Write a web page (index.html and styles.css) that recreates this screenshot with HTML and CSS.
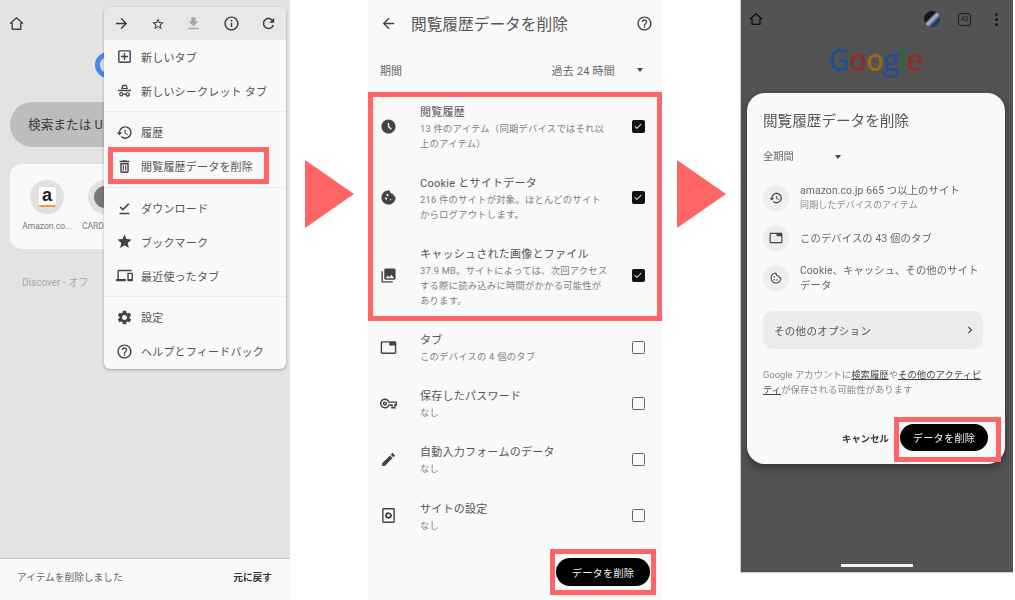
FILE: index.html
```html
<!DOCTYPE html>
<html lang="ja">

<head>
    <meta charset="UTF-8">
    <title>閲覧履歴データを削除</title>
    <link rel="stylesheet" href="styles.css">
</head>

<body>
    <svg class="icon-defs" aria-hidden="true">
        <symbol id="i-home" viewBox="0 0 24 24"><path d="M12 4 3.5 11.7H6V20h12v-8.3h2.5z" fill="none" stroke="currentColor" stroke-width="2" stroke-linejoin="round"/></symbol>
        <symbol id="i-forward" viewBox="0 0 24 24"><path d="M12 4l-1.41 1.41L16.17 11H4v2h12.17l-5.58 5.59L12 20l8-8z"/></symbol>
        <symbol id="i-back" viewBox="0 0 24 24"><path d="M20 11H7.83l5.59-5.59L12 4l-8 8 8 8 1.41-1.41L7.83 13H20v-2z"/></symbol>
        <symbol id="i-star-o" viewBox="0 0 24 24"><path d="M22 9.24l-7.19-.62L12 2 9.19 8.63 2 9.24l5.46 4.73L5.82 21 12 17.27 18.18 21l-1.63-7.03L22 9.24zM12 15.4l-3.76 2.27 1-4.28-3.32-2.88 4.38-.38L12 6.1l1.71 4.04 4.38.38-3.32 2.88 1 4.28L12 15.4z"/></symbol>
        <symbol id="i-star" viewBox="0 0 24 24"><path d="M12 17.27L18.18 21l-1.64-7.03L22 9.24l-7.19-.61L12 2 9.19 8.63 2 9.24l5.46 4.73L5.82 21z"/></symbol>
        <symbol id="i-download" viewBox="0 0 24 24"><path d="M19 9h-4V3H9v6H5l7 7 7-7zM5 18v2h14v-2H5z"/></symbol>
        <symbol id="i-info" viewBox="0 0 24 24"><path d="M11 7h2v2h-2zm0 4h2v6h-2zm1-9C6.48 2 2 6.48 2 12s4.48 10 10 10 10-4.48 10-10S17.52 2 12 2zm0 18c-4.41 0-8-3.59-8-8s3.59-8 8-8 8 3.59 8 8-3.59 8-8 8z"/></symbol>
        <symbol id="i-refresh" viewBox="0 0 24 24"><path d="M17.65 6.35C16.2 4.9 14.21 4 12 4c-4.42 0-7.99 3.58-7.99 8s3.57 8 7.99 8c3.73 0 6.84-2.55 7.73-6h-2.08c-.82 2.33-3.04 4-5.65 4-3.31 0-6-2.69-6-6s2.69-6 6-6c1.66 0 3.14.69 4.22 1.78L13 11h7V4l-2.35 2.35z"/></symbol>
        <symbol id="i-addbox" viewBox="0 0 24 24"><path d="M5 3h14a2 2 0 0 1 2 2v14a2 2 0 0 1-2 2H5a2 2 0 0 1-2-2V5a2 2 0 0 1 2-2zm0 2v14h14V5zm6 2h2v4h4v2h-4v4h-2v-4H7v-2h4z"/></symbol>
        <symbol id="i-incognito" viewBox="0 0 24 24"><path d="M9 4h6l2 6H7zm1.4 2-.9 2.4h5L14.600 6zM3 11h18v2H3zM7.500 14a3.200 3.200 0 0 1 3 2.300h3a3.200 3.200 0 1 1-.2 1.700h-2.600a3.200 3.200 0 1 1-3.200-4zm0 2a1.300 1.300 0 1 0 0 2.600 1.300 1.300 0 0 0 0-2.600zm9 0a1.300 1.300 0 1 0 0 2.600 1.300 1.300 0 0 0 0-2.600z"/></symbol>
        <symbol id="i-history" viewBox="0 0 24 24"><path d="M13 3c-4.97 0-9 4.03-9 9H1l3.89 3.89.07.14L9 12H6c0-3.87 3.13-7 7-7s7 3.13 7 7-3.13 7-7 7c-1.93 0-3.68-.79-4.94-2.06l-1.42 1.42C8.270 19.990 10.510 21 13 21c4.970 0 9-4.030 9-9s-4.030-9-9-9zm-1 5v5l4.280 2.540.72-1.210-3.500-2.080V8H12z"/></symbol>
        <symbol id="i-trash" viewBox="0 0 24 24"><path d="M6 19c0 1.100.9 2 2 2h8c1.100 0 2-.9 2-2V7H6v12zM8 9h8v10H8V9zm1.500 1.500h1.700v7H9.500zm3.300 0h1.700v7h-1.700zM15.500 4l-1-1h-5l-1 1H5v2h14V4h-3.500z"/></symbol>
        <symbol id="i-done" viewBox="0 0 24 24"><path d="M5 18h14v2H5v-2zm4.600-2.700L5 10.700l1.700-1.600 2.900 2.800L17.300 4.500 19 6.100z"/></symbol>
        <symbol id="i-devices" viewBox="0 0 24 24"><path d="M4 6h18V4H4c-1.100 0-2 .9-2 2v11H0v3h14v-3H4V6zm19 2h-6c-.55 0-1 .45-1 1v10c0 .55.45 1 1 1h6c.55 0 1-.45 1-1V9c0-.55-.45-1-1-1zm-1 9h-4v-7h4v7z"/></symbol>
        <symbol id="i-gear" viewBox="0 0 24 24"><path d="M19.140 12.940c.04-.3.06-.61.06-.94 0-.32-.02-.64-.07-.94l2.030-1.580c.18-.14.23-.41.12-.61l-1.920-3.320c-.12-.22-.37-.29-.59-.22l-2.390.96c-.5-.38-1.030-.7-1.620-.94l-.36-2.540c-.04-.24-.24-.41-.48-.41h-3.840c-.24 0-.43.17-.47.41l-.36 2.540c-.59.24-1.130.57-1.620.94l-2.390-.96c-.22-.08-.47 0-.59.22L2.740 8.870c-.12.21-.08.47.12.61l2.030 1.580c-.05.3-.09.63-.09.94s.02.64.07.94l-2.030 1.580c-.18.14-.23.41-.12.61l1.920 3.320c.12.22.37.29.59.22l2.390-.96c.5.38 1.030.7 1.620.94l.36 2.540c.05.24.24.41.48.41h3.840c.24 0 .44-.17.47-.41l.36-2.540c.59-.24 1.130-.56 1.620-.94l2.390.96c.22.08.47 0 .59-.22l1.920-3.320c.12-.22.07-.47-.12-.61l-2.010-1.580zM12 15.600c-1.980 0-3.600-1.620-3.600-3.600s1.620-3.600 3.600-3.600 3.600 1.620 3.600 3.600-1.620 3.600-3.600 3.600z"/></symbol>
        <symbol id="i-help" viewBox="0 0 24 24"><path d="M11 18h2v-2h-2v2zm1-16C6.480 2 2 6.480 2 12s4.480 10 10 10 10-4.480 10-10S17.520 2 12 2zm0 18c-4.410 0-8-3.590-8-8s3.590-8 8-8 8 3.590 8 8-3.590 8-8 8zm0-14c-2.210 0-4 1.790-4 4h2c0-1.100.9-2 2-2s2 .9 2 2c0 2-3 1.750-3 5h2c0-2.250 3-2.500 3-5 0-2.210-1.790-4-4-4z"/></symbol>
        <symbol id="i-clock" viewBox="0 0 24 24"><path d="M11.990 2C6.470 2 2 6.480 2 12s4.470 10 9.990 10C17.520 22 22 17.520 22 12S17.520 2 11.990 2zm3.300 14.710L11 12.410V7h2v4.590l3.710 3.710-1.420 1.410z"/></symbol>
        <symbol id="i-cookie" viewBox="0 0 24 24"><path d="M21.950 10.990c-1.790-.03-3.700-1.950-2.680-4.220-2.970 1-5.780-1.590-5.190-4.560C7.100.74 2 6.410 2 12c0 5.520 4.480 10 10 10 5.890 0 10.540-5.080 9.950-11.010zM8.500 15c-.83 0-1.500-.67-1.500-1.500S7.670 12 8.500 12s1.500.67 1.500 1.500S9.330 15 8.500 15zm2-5C9.670 10 9 9.330 9 8.500S9.670 7 10.500 7s1.500.67 1.500 1.500-.67 1.500-1.500 1.500zm4.500 6c-.55 0-1-.45-1-1s.45-1 1-1 1 .45 1 1-.45 1-1 1z"/></symbol>
        <symbol id="i-cookie-o" viewBox="0 0 24 24"><path d="M12 3.500a8.500 8.500 0 1 0 8.500 8.500c-2.300 0-3.800-1.300-4-3.300-2.300.1-4.300-1.800-4.500-5.200z" fill="none" stroke="currentColor" stroke-width="1.800" stroke-linejoin="round"/><circle cx="9" cy="10" r="1.300"/><circle cx="8.700" cy="15" r="1.300"/><circle cx="14" cy="15.500" r="1.300"/></symbol>
        <symbol id="i-photos" viewBox="0 0 24 24"><path d="M22 16V4c0-1.100-.9-2-2-2H8c-1.100 0-2 .9-2 2v12c0 1.100.9 2 2 2h12c1.100 0 2-.9 2-2zm-11-4l2.030 2.710L16 11l4 5H8l3-4zM2 6v14c0 1.100.9 2 2 2h14v-2H4V6H2z"/></symbol>
        <symbol id="i-tab" viewBox="0 0 24 24"><path d="M21 3H3c-1.100 0-2 .9-2 2v14c0 1.100.9 2 2 2h18c1.100 0 2-.9 2-2V5c0-1.100-.9-2-2-2zm0 16H3V5h10v4h8v10z"/></symbol>
        <symbol id="i-key" viewBox="0 0 24 24"><path d="M22 19h-6v-4h-2.680c-1.140 2.420-3.600 4-6.320 4-3.860 0-7-3.140-7-7s3.140-7 7-7c2.720 0 5.170 1.580 6.320 4H24v6h-2v4zm-4-2h2v-4h2v-2H11.940l-.23-.67C11.010 8.340 9.110 7 7 7c-2.760 0-5 2.240-5 5s2.240 5 5 5c2.110 0 4.010-1.340 4.710-3.330l.23-.67H18v4zM7 15c-1.650 0-3-1.350-3-3s1.350-3 3-3 3 1.350 3 3-1.350 3-3 3zm0-4c-.55 0-1 .45-1 1s.45 1 1 1 1-.45 1-1-.45-1-1-1z"/></symbol>
        <symbol id="i-edit" viewBox="0 0 24 24"><path d="M3 17.250V21h3.750L17.810 9.940l-3.750-3.750L3 17.250zM20.710 7.040c.39-.39.39-1.020 0-1.410l-2.340-2.340c-.39-.39-1.020-.39-1.410 0l-1.830 1.830 3.750 3.750 1.830-1.830z"/></symbol>
        <symbol id="i-site" viewBox="0 0 24 24"><path d="M5 1.500h14a2 2 0 0 1 2 2v17a2 2 0 0 1-2 2H5a2 2 0 0 1-2-2v-17a2 2 0 0 1 2-2zm0 2v17h14v-17z"/><path d="M12 7l1.200 1.500 1.900-.3.700 1.800 1.700 1.900-1.200 1.500-.3 1.900-1.800.7L12 17l-1.500-1.200-1.900.3-.7-1.800L6.700 12l1.200-1.500.3-1.900 1.800-.7zm0 3a2 2 0 1 0 0 4 2 2 0 0 0 0-4z"/></symbol>
        <symbol id="i-check" viewBox="0 0 24 24"><path d="M9.500 16.200 5.300 12l-1.500 1.500 5.700 5.700L20.700 8 19.200 6.500z"/></symbol>
        <symbol id="i-chevron" viewBox="0 0 24 24"><path d="M10 6 8.600 7.400 13.200 12l-4.600 4.600L10 18l6-6z"/></symbol>
    </svg>

    <div class="page">

        <section class="phone phone-menu">
            <div class="top-bar">
                <svg class="icon icon-home"><use href="#i-home"/></svg>
            </div>
            <div class="google-arc"></div>
            <div class="search-pill">検索または U</div>
            <div class="shortcuts">
                <div class="shortcut">
                    <div class="shortcut-circle"><span class="amazon-logo">a</span></div>
                    <span class="shortcut-label">Amazon.co...</span>
                </div>
                <div class="shortcut">
                    <div class="shortcut-circle"><span class="card-dot"></span></div>
                    <span class="shortcut-label shortcut-label-cut">CARD</span>
                </div>
            </div>
            <p class="discover">Discover - オフ</p>
            <div class="snackbar">
                <span>アイテムを削除しました</span>
                <span class="snackbar-action">元に戻す</span>
            </div>

            <div class="menu">
                <div class="menu-tools">
                    <svg class="tool"><use href="#i-forward"/></svg>
                    <svg class="tool tool-small"><use href="#i-star-o"/></svg>
                    <svg class="tool tool-off"><use href="#i-download"/></svg>
                    <svg class="tool"><use href="#i-info"/></svg>
                    <svg class="tool"><use href="#i-refresh"/></svg>
                </div>
                <div class="menu-group">
                    <div class="menu-item"><svg class="icon"><use href="#i-addbox"/></svg>新しいタブ</div>
                    <div class="menu-item"><svg class="icon"><use href="#i-incognito"/></svg>新しいシークレット タブ</div>
                </div>
                <div class="menu-group">
                    <div class="menu-item"><svg class="icon"><use href="#i-history"/></svg>履歴</div>
                    <div class="menu-item"><svg class="icon"><use href="#i-trash"/></svg>閲覧履歴データを削除</div>
                </div>
                <div class="menu-group">
                    <div class="menu-item"><svg class="icon"><use href="#i-done"/></svg>ダウンロード</div>
                    <div class="menu-item"><svg class="icon"><use href="#i-star"/></svg>ブックマーク</div>
                    <div class="menu-item"><svg class="icon"><use href="#i-devices"/></svg>最近使ったタブ</div>
                </div>
                <div class="menu-group">
                    <div class="menu-item"><svg class="icon"><use href="#i-gear"/></svg>設定</div>
                    <div class="menu-item"><svg class="icon"><use href="#i-help"/></svg>ヘルプとフィードバック</div>
                </div>
            </div>
            <div class="mark mark-menu"></div>
        </section>

        <div class="arrow"></div>

        <section class="phone phone-settings">
            <header class="settings-head">
                <svg class="icon head-back"><use href="#i-back"/></svg>
                <h2>閲覧履歴データを削除</h2>
                <svg class="icon head-help"><use href="#i-help"/></svg>
            </header>
            <div class="period">
                <span>期間</span>
                <span class="period-value">過去 24 時間</span>
                <span class="caret"></span>
            </div>
            <div class="options">
                <div class="option">
                    <svg class="icon"><use href="#i-clock"/></svg>
                    <div class="option-text">
                        <div class="option-title">閲覧履歴</div>
                        <div class="option-desc">13 件のアイテム（同期デバイスではそれ以<br>上のアイテム）</div>
                    </div>
                    <span class="check is-on"><svg><use href="#i-check"/></svg></span>
                </div>
                <div class="option">
                    <svg class="icon"><use href="#i-cookie"/></svg>
                    <div class="option-text">
                        <div class="option-title">Cookie とサイトデータ</div>
                        <div class="option-desc">216 件のサイトが対象。ほとんどのサイト<br>からログアウトします。</div>
                    </div>
                    <span class="check is-on"><svg><use href="#i-check"/></svg></span>
                </div>
                <div class="option">
                    <svg class="icon"><use href="#i-photos"/></svg>
                    <div class="option-text">
                        <div class="option-title">キャッシュされた画像とファイル</div>
                        <div class="option-desc">37.9 MB。サイトによっては、次回アクセス<br>する際に読み込みに時間がかかる可能性が<br>あります。</div>
                    </div>
                    <span class="check is-on"><svg><use href="#i-check"/></svg></span>
                </div>
                <div class="option">
                    <svg class="icon"><use href="#i-tab"/></svg>
                    <div class="option-text">
                        <div class="option-title">タブ</div>
                        <div class="option-desc">このデバイスの 4 個のタブ</div>
                    </div>
                    <span class="check"></span>
                </div>
                <div class="option">
                    <svg class="icon"><use href="#i-key"/></svg>
                    <div class="option-text">
                        <div class="option-title">保存したパスワード</div>
                        <div class="option-desc">なし</div>
                    </div>
                    <span class="check"></span>
                </div>
                <div class="option">
                    <svg class="icon"><use href="#i-edit"/></svg>
                    <div class="option-text">
                        <div class="option-title">自動入力フォームのデータ</div>
                        <div class="option-desc">なし</div>
                    </div>
                    <span class="check"></span>
                </div>
                <div class="option">
                    <svg class="icon"><use href="#i-site"/></svg>
                    <div class="option-text">
                        <div class="option-title">サイトの設定</div>
                        <div class="option-desc">なし</div>
                    </div>
                    <span class="check"></span>
                </div>
            </div>
            <button class="btn-clear btn-settings">データを削除</button>
            <div class="mark mark-options"></div>
            <div class="mark mark-settings-btn"></div>
        </section>

        <div class="arrow"></div>

        <section class="phone phone-dialog">
            <div class="dark-bar">
                <svg class="icon icon-home dark-home"><use href="#i-home"/></svg>
                <span class="avatar"></span>
                <span class="tab-count">43</span>
                <span class="dots"><i></i><i></i><i></i></span>
            </div>
            <div class="google-logo"><span class="g-blue">G</span><span class="g-red">o</span><span class="g-yellow">o</span><span class="g-blue">g</span><span class="g-green">l</span><span class="g-red">e</span></div>
            <div class="dialog">
                <h3>閲覧履歴データを削除</h3>
                <div class="range"><span>全期間</span><span class="caret"></span></div>
                <div class="summary">
                    <span class="summary-icon"><svg><use href="#i-history"/></svg></span>
                    <div>
                        <div>amazon.co.jp 665 つ以上のサイト</div>
                        <div class="summary-sub">同期したデバイスのアイテム</div>
                    </div>
                </div>
                <div class="summary">
                    <span class="summary-icon"><svg><use href="#i-tab"/></svg></span>
                    <div>このデバイスの 43 個のタブ</div>
                </div>
                <div class="summary">
                    <span class="summary-icon"><svg><use href="#i-cookie-o"/></svg></span>
                    <div>Cookie、キャッシュ、その他のサイト<br>データ</div>
                </div>
                <div class="more-options">
                    <span>その他のオプション</span>
                    <svg><use href="#i-chevron"/></svg>
                </div>
                <p class="dialog-note">Google アカウントに<u>検索履歴</u>や<u>その他のアクティビ<br>ティ</u>が保存される可能性があります</p>
                <div class="dialog-actions">
                    <span class="cancel">キャンセル</span>
                    <button class="btn-clear btn-dialog">データを削除</button>
                </div>
            </div>
            <div class="home-line"></div>
            <div class="mark mark-dialog-btn"></div>
        </section>

    </div>
</body>

</html>
```
FILE: styles.css
```css
/* Base */
body {
    margin: 0;
    background: #fff;
    font-family: Roboto, 'Noto Sans CJK JP', sans-serif;
    color: #4a4a4a;
}

.icon-defs {
    display: none;
}

/* the screenshots are a little soft, so the whole sheet is too */
.page {
    display: flex;
    width: 1015px;
    height: 600px;
    overflow: hidden;
    filter: blur(0.3px);
}

.phone {
    position: relative;
    flex: none;
    box-sizing: border-box;
}

.icon {
    flex: none;
    width: 17px;
    height: 17px;
    fill: #444;
    color: #444;
}

.arrow {
    flex: none;
    width: 49px;
    height: 68px;
    margin: 160px 14px 0 15px;
    background: #ff6565;
    clip-path: polygon(0 0, 100% 50%, 0 100%);
}

/* Red frames laid over the screens */
.mark {
    position: absolute;
    box-sizing: border-box;
    border: 5px solid #ff6565;
}

.mark-menu {
    left: 108px;
    top: 147px;
    width: 161px;
    height: 37px;
}

.mark-options {
    left: 0;
    top: 92px;
    width: 294px;
    height: 229px;
}

.mark-settings-btn {
    left: 182px;
    top: 549px;
    width: 106px;
    height: 46px;
}

.mark-dialog-btn {
    left: 153px;
    top: 417px;
    width: 107px;
    height: 45px;
}

/* Left screen with the menu open */
.phone-menu {
    width: 290px;
    height: 600px;
    background: #e3e3e3;
}

.top-bar {
    height: 46px;
    padding: 15px 0 0 8px;
    box-sizing: border-box;
}

.google-arc {
    position: absolute;
    left: 95px;
    top: 52px;
    width: 26px;
    height: 26px;
    box-sizing: border-box;
    border: 5px solid #4a86ee;
    border-radius: 50%;
}

.search-pill {
    margin: 56px 0 0 10px;
    width: 250px;
    height: 45px;
    padding-left: 18px;
    box-sizing: border-box;
    border-radius: 23px;
    background: #bdbdbd;
    font-size: 12.700px;
    line-height: 45px;
    color: #3c3c3c;
}

.shortcuts {
    display: flex;
    gap: 6px;
    margin: 17px 0 0 10px;
    width: 250px;
    height: 85px;
    padding: 16px 0 0 11px;
    box-sizing: border-box;
    border-radius: 12px;
    background: #f9f9f9;
}

.shortcut {
    display: flex;
    flex-direction: column;
    align-items: center;
    width: 52px;
}

.shortcut-circle {
    display: flex;
    align-items: center;
    justify-content: center;
    width: 34px;
    height: 34px;
    border-radius: 50%;
    background: #e0e0e0;
}

.amazon-logo {
    width: 17px;
    height: 20px;
    background: #fff;
    border-bottom: 2px solid #f19e38;
    border-radius: 2px;
    box-sizing: border-box;
    font: bold 18px/16px 'Liberation Sans', sans-serif;
    color: #222;
    text-align: center;
}

.card-dot {
    width: 22px;
    height: 22px;
    border-radius: 50%;
    background: #777;
}

.shortcut-label {
    margin-top: 6px;
    font-size: 8.500px;
    line-height: 12px;
    color: #777;
    white-space: nowrap;
}

.shortcut-label-cut {
    align-self: flex-start;
    margin-left: 3px;
}

.discover {
    margin: 28px 0 0 22px;
    font-size: 10px;
    line-height: 12px;
    color: #a9a9a9;
}

.snackbar {
    position: absolute;
    left: 0;
    right: 0;
    bottom: 0;
    display: flex;
    justify-content: space-between;
    height: 42px;
    padding: 11px 18px 0 17px;
    box-sizing: border-box;
    background: #f9f9f9;
    border-top: 1px solid #c9c9c9;
    font-size: 9.700px;
    line-height: 15px;
    color: #666;
}

.snackbar-action {
    font-weight: 700;
    color: #333;
}

.menu {
    position: absolute;
    left: 104px;
    top: 7px;
    width: 182px;
    height: 362px;
    border-radius: 6px;
    background: #f9f9f9;
    box-shadow: 0 1px 3px rgba(0, 0, 0, 0.3);
    overflow: hidden;
}

.menu-tools {
    display: flex;
    justify-content: space-between;
    align-items: center;
    height: 33px;
    padding: 0 9px;
    background: #e8e8e8;
}

.tool {
    width: 17px;
    height: 17px;
    fill: #3a3a3a;
}

.tool-small {
    width: 14px;
    height: 14px;
}

.tool-off {
    fill: #a8a8a8;
}

.menu-group {
    padding: 0 12px 3.500px;
    border-bottom: 1px solid #ececec;
    margin-bottom: 3.500px;
}

.menu-group:last-child {
    border-bottom: none;
}

.menu-item {
    display: flex;
    align-items: center;
    gap: 8px;
    height: 33.800px;
    font-size: 11px;
    letter-spacing: 0.200px;
    color: #555;
    white-space: nowrap;
}

/* Middle screen, clear browsing data settings */
.phone-settings {
    width: 294px;
    height: 600px;
    background: #f9f9f9;
}

.settings-head {
    display: flex;
    align-items: center;
    height: 46px;
    padding: 0 9px 0 12px;
}

.settings-head h2 {
    flex: 1;
    margin: 0 0 0 14px;
    font-size: 15.700px;
    font-weight: 400;
    color: #555;
}

.period {
    display: flex;
    align-items: center;
    height: 48px;
    padding: 0 19px 0 12px;
    font-size: 11px;
    color: #666;
}

.period-value {
    margin-left: auto;
    letter-spacing: 0.200px;
}

.caret {
    width: 0;
    height: 0;
    margin-left: 22px;
    border-left: 3.500px solid transparent;
    border-right: 3.500px solid transparent;
    border-top: 4px solid #444;
}

.options {
    display: flex;
    flex-direction: column;
    gap: 24.200px;
    padding: 9.500px 0 0 12px;
}

.option {
    display: flex;
    align-items: center;
}

.option .icon {
    margin-bottom: 2px;
}

.option-text {
    flex: 1;
    margin-left: 23px;
}

.option-title {
    font-size: 11px;
    line-height: 17px;
    letter-spacing: 0.250px;
    color: #555;
}

.option-desc {
    font-size: 9.300px;
    line-height: 15px;
    letter-spacing: 0.250px;
    color: #808080;
}

.check {
    flex: none;
    width: 13px;
    height: 13px;
    margin: 0 17px 2px 0;
    box-sizing: border-box;
    border: 1.500px solid #666;
    border-radius: 1.500px;
}

.check.is-on {
    background: #111;
    border-color: #111;
}

.check svg {
    display: block;
    width: 10px;
    height: 10px;
    fill: #fff;
}

.btn-clear {
    border: none;
    border-radius: 14px;
    background: #000;
    color: #f2f2f2;
    font-family: inherit;
    font-size: 10.200px;
    letter-spacing: 0.200px;
}

.btn-settings {
    position: absolute;
    left: 188px;
    top: 558px;
    width: 94px;
    height: 28px;
}

/* Right screen, dialog over the dimmed page */
.phone-dialog {
    width: 273px;
    height: 573px;
    background: #535353;
    border-left: 1px solid #c8c8c8;
    border-bottom: 1px solid #c8c8c8;
}

.dark-bar {
    display: flex;
    align-items: center;
    height: 38px;
    padding-left: 7px;
}

.dark-home {
    color: #0f0f0f;
    width: 16px;
    height: 16px;
}

.avatar {
    width: 16px;
    height: 16px;
    margin-left: 160px;
    border-radius: 50%;
    background: linear-gradient(135deg, #0c1526 38%, #a8a8a8 48%, #a8a8a8 55%, #1b3a78 70%);
}

.tab-count {
    width: 11px;
    height: 11px;
    margin-left: 18px;
    border: 1.500px solid #1c1c1c;
    border-radius: 3px;
    font-size: 7px;
    line-height: 11px;
    letter-spacing: -0.300px;
    text-align: center;
    color: #1c1c1c;
}

.dots {
    display: flex;
    flex-direction: column;
    gap: 2px;
    margin-left: 23.500px;
}

.dots i {
    width: 3px;
    height: 3px;
    border-radius: 50%;
    background: #1c1c1c;
}

.google-logo {
    height: 55px;
    margin-right: 4px;
    text-align: center;
    font-family: 'Open Sans', sans-serif;
    font-size: 30px;
    font-weight: 600;
    line-height: 44px;
    letter-spacing: -1.200px;
}

.g-blue {
    color: #224f8d;
}

.g-red {
    color: #8b3029;
}

.g-yellow {
    color: #8c6d1c;
}

.g-green {
    color: #2a6b3c;
}

.dialog {
    margin-left: 6px;
    width: 258px;
    height: 371px;
    padding: 17px 22px 0 16px;
    box-sizing: border-box;
    border-radius: 18px;
    background: #f9f9f9;
    box-shadow: 0 4px 10px rgba(0, 0, 0, 0.35);
}

.dialog h3 {
    margin: 0;
    font-size: 14.600px;
    line-height: 22px;
    font-weight: 400;
    color: #555;
}

.range {
    display: flex;
    align-items: center;
    margin: 17px 0 18px;
    font-size: 10.300px;
    line-height: 16px;
    color: #666;
}

.range .caret {
    margin-left: 41px;
}

.summary {
    display: flex;
    align-items: center;
    gap: 11px;
    min-height: 26px;
    margin-bottom: 12px;
    font-size: 10.300px;
    line-height: 15px;
    letter-spacing: 0.150px;
    color: #666;
}

.summary-sub {
    font-size: 9px;
    color: #888;
}

.summary-icon {
    display: flex;
    align-items: center;
    justify-content: center;
    flex: none;
    width: 26px;
    height: 26px;
    border-radius: 50%;
    background: #eeeeee;
}

.summary-icon svg {
    width: 14px;
    height: 14px;
    fill: #444;
    color: #444;
}

.more-options {
    display: flex;
    align-items: center;
    justify-content: space-between;
    width: 220px;
    height: 38px;
    margin-top: 18px;
    padding: 0 6px 0 11px;
    box-sizing: border-box;
    border-radius: 10px;
    background: #ececec;
    font-size: 10.500px;
    letter-spacing: 0.300px;
    color: #555;
}

.more-options svg {
    width: 14px;
    height: 14px;
    fill: #444;
}

.dialog-note {
    margin: 18px 0 0;
    font-size: 9.400px;
    line-height: 15px;
    color: #888;
    white-space: nowrap;
}

.dialog-note u {
    color: #444;
}

.dialog-actions {
    display: flex;
    align-items: center;
    justify-content: flex-end;
    gap: 11px;
    margin-top: 27px;
    width: 225px;
}

.cancel {
    font-size: 9.400px;
    font-weight: 700;
    color: #333;
}

.btn-dialog {
    width: 88px;
    height: 27px;
}

.home-line {
    position: absolute;
    left: 100px;
    top: 564px;
    width: 72px;
    height: 2.500px;
    background: #f4f4f4;
}
```
